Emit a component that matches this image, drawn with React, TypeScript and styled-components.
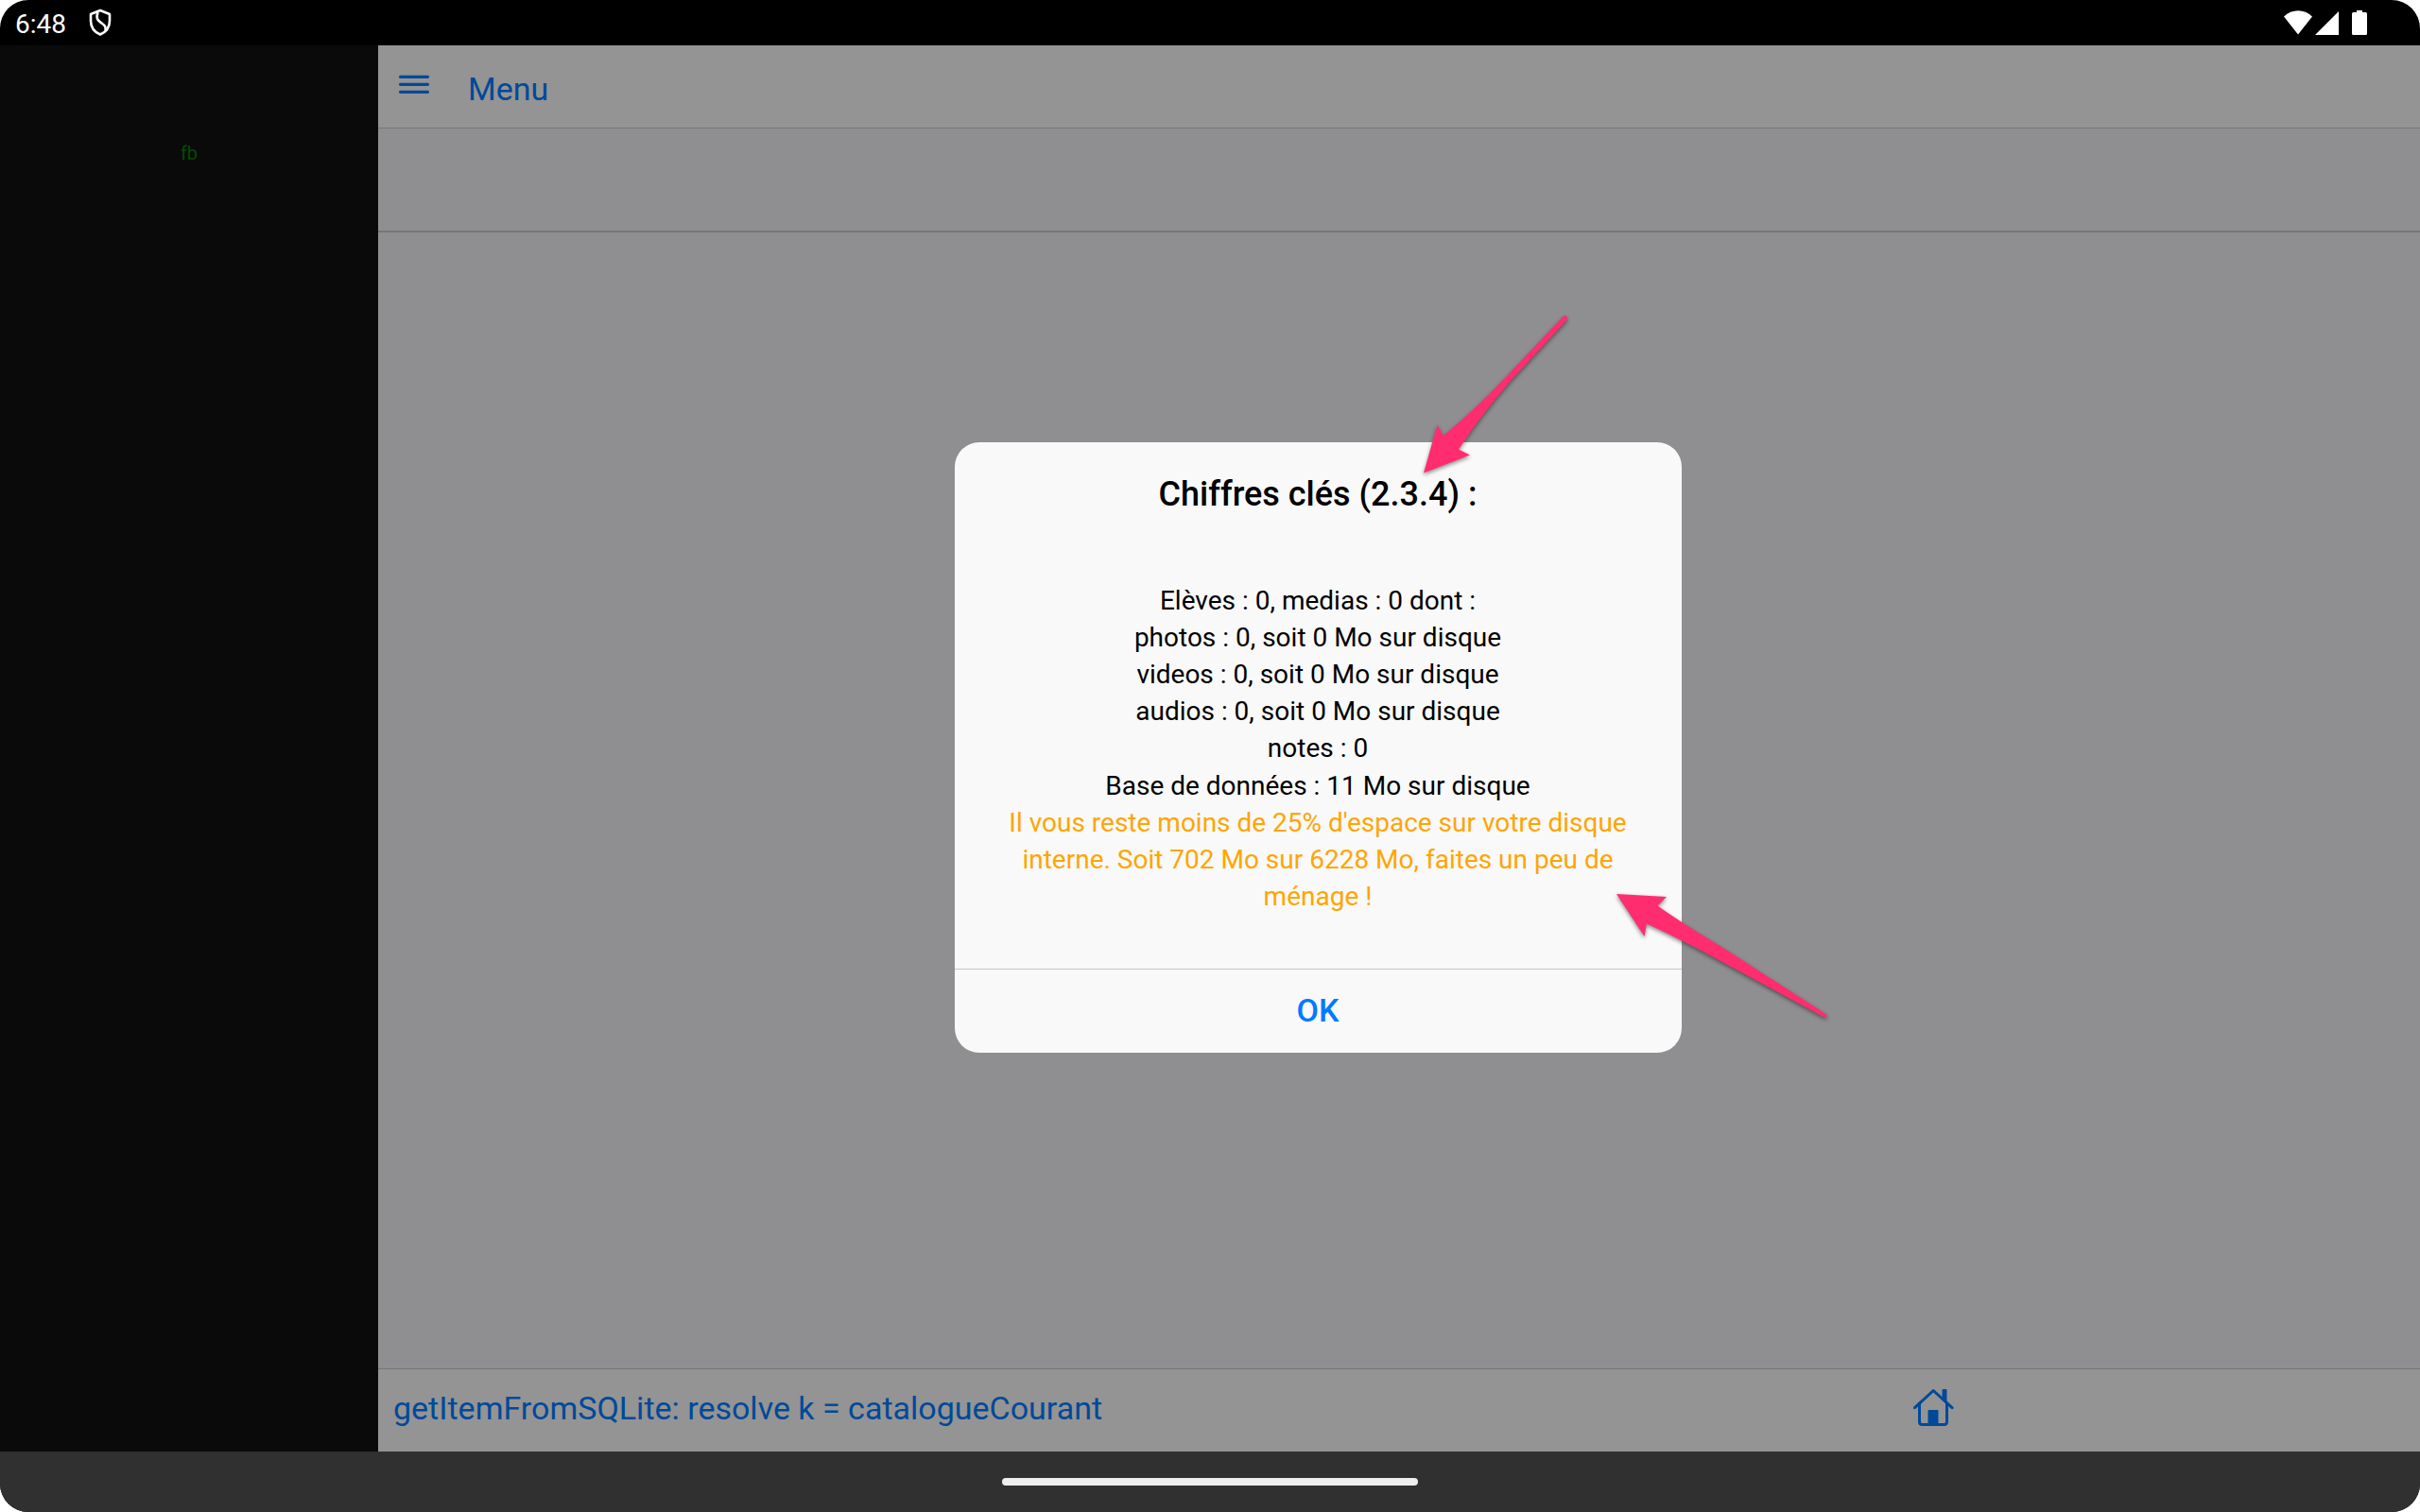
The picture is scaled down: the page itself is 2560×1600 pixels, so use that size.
import React from "react";
import styled, { createGlobalStyle } from "styled-components";

const Global = createGlobalStyle`
  html, body { margin: 0; padding: 0; background: #fff; overflow: hidden; }
  * { box-sizing: border-box; }
`;

const Device = styled.div`
  position: relative;
  width: 2560px;
  height: 1600px;
  display: flex;
  flex-direction: column;
  overflow: hidden;
  border-radius: 30px;
  background: #000;
  font-family: Roboto, "Noto Sans", sans-serif;
`;

const StatusBar = styled.header`
  flex: 0 0 48px;
  display: flex;
  align-items: center;
  justify-content: space-between;
  padding: 0 56px 0 16px;
  color: #fff;
`;

const StatusGroup = styled.div<{ $gap: number }>`
  display: flex;
  align-items: center;
  gap: ${(p) => p.$gap}px;
  svg { display: block; }
`;

const Clock = styled.span`
  font-size: 28px;
  line-height: 33px;
  padding-top: 2px;
`;

const Content = styled.div`
  flex: 1;
  min-height: 0;
  display: flex;
`;

const Sidebar = styled.aside`
  flex: 0 0 400px;
  background: #0a0a0a;
  padding-top: 102px;
  text-align: center;
`;

const SidebarLabel = styled.span`
  display: block;
  font-size: 20px;
  line-height: 24px;
  color: #004d00;
`;

const Main = styled.main`
  flex: 1;
  min-width: 0;
  display: flex;
  flex-direction: column;
  background: #8f8f92;
`;

const NavBar = styled.nav`
  flex: 0 0 88px;
  display: flex;
  align-items: flex-start;
  padding: 26px 20px 0 16px;
  gap: 35px;
  background: #949494;
  border-bottom: 1px solid #767676;
  color: #004999;
  svg { display: block; }
`;

const NavTitle = styled.span`
  font-size: 34px;
  line-height: 40px;
`;

const SubBar = styled.div`
  flex: 0 0 110px;
  border-bottom: 2px solid #777779;
`;

const Page = styled.section`
  flex: 1;
`;

const Toolbar = styled.footer`
  flex: 0 0 88px;
  display: flex;
  align-items: flex-start;
  justify-content: space-between;
  padding: 21px 492px 0 16px;
  background: #949494;
  border-top: 1px solid #767676;
  color: #004999;
  svg { display: block; margin-top: -1px; }
`;

const GestureBar = styled.div`
  flex: 0 0 64px;
  display: flex;
  justify-content: center;
  padding-top: 28px;
  background: #303030;
`;

const GestureHandle = styled.div`
  width: 440px;
  height: 8px;
  border-radius: 4px;
  background: #eeeeee;
`;

const Dialog = styled.div`
  position: absolute;
  left: 1010px;
  top: 468px;
  width: 769px;
  height: 646px;
  display: flex;
  flex-direction: column;
  border-radius: 26px;
  background: #f9f9f9;
  overflow: hidden;
  text-align: center;
  color: #000;
`;

const DialogTitle = styled.h2`
  margin: 0;
  padding: 34px 1px 0 0;
  font-size: 36px;
  line-height: 42px;
  font-weight: 500;
`;

const DialogBody = styled.div`
  flex: 1;
  padding: 71.5px 33px 0 32px;
  font-size: 28px;
  line-height: 39.2px;
`;

const Line = styled.div<{ $warn?: boolean }>`
  color: ${(p) => (p.$warn ? "#ffa500" : "#000")};
`;

const DialogButton = styled.button`
  flex: 0 0 89px;
  border: 0;
  border-top: 1px solid #c4c4c4;
  padding: 0 1px 2px 0;
  background: transparent;
  font: 500 34px/86px Roboto, sans-serif;
  color: #007aff;
`;

const Annotations = styled.svg`
  position: absolute;
  left: 0;
  top: 0;
  pointer-events: none;
  filter: drop-shadow(0 2px 2px rgba(0, 0, 0, 0.45));
`;

const ShieldIcon = () => (
  <svg width="24" height="30" viewBox="0 0 24 30" fill="none" stroke="#fff" strokeWidth="2.6">
    <path d="M12 2 L22 6 V13 C22 20 18 25 12 27.5 C6 25 2 20 2 13 V6 Z" strokeLinejoin="round" />
    <path d="M9.5 4 C7 11 10 13 13.5 15.500 C17 18 18 19 17.500 23" />
  </svg>
);

const WifiIcon = () => (
  <svg width="30" height="26" viewBox="0 0 30 26" fill="#fff">
    <path d="M0 6.500 C8.500 -1.800 21.500 -1.800 30 6.500 L15 25.500 Z" />
  </svg>
);

const SignalIcon = () => (
  <svg width="25" height="25" viewBox="0 0 25 25" fill="#fff"><path d="M25 0V25H0Z" /></svg>
);

const BatteryIcon = () => (
  <svg width="16" height="26" viewBox="0 0 16 26" fill="#fff">
    <path d="M5 0H11V2H14.500Q16 2 16 3.500V24.500Q16 26 14.500 26H1.500Q0 26 0 24.500V3.500Q0 2 1.500 2H5Z" />
  </svg>
);

const MenuIcon = () => (
  <svg width="44" height="32" viewBox="0 0 44 32" stroke="currentColor" strokeWidth="3.2" strokeLinecap="round">
    <path d="M7.500 7.300H36.500M7.500 15.300H36.500M7.500 23.300H36.500" />
  </svg>
);

const HomeIcon = () => (
  <svg width="44" height="40" viewBox="0.5 0 44 40" fill="none" stroke="currentColor" strokeWidth="3" strokeLinecap="round" strokeLinejoin="round">
    <path d="M2 20.700L21.700 2.500L41.500 20.700" />
    <path d="M7 16V35.500Q7 38.500 10 38.500H33Q36 38.500 36 35.500V16" />
    <path d="M16 38V24Q16 23 17 23H26Q27 23 27 24V38Z" fill="currentColor" stroke="none" />
    <path d="M31 10V2Q31 1 32 1H35Q36 1 36 2V15L31 10Z" fill="currentColor" stroke="none" />
  </svg>
);

const lines = [
  "Elèves : 0, medias : 0 dont :",
  "photos : 0, soit 0 Mo sur disque",
  "videos : 0, soit 0 Mo sur disque",
  "audios : 0, soit 0 Mo sur disque",
  "notes : 0",
  "Base de données : 11 Mo sur disque",
];

export default function App() {
  return (
    <>
      <Global />
      <Device>
        <StatusBar>
          <StatusGroup $gap={24}>
            <Clock>6:48</Clock>
            <ShieldIcon />
          </StatusGroup>
          <StatusGroup $gap={14}>
            <StatusGroup $gap={3}>
              <WifiIcon />
              <SignalIcon />
            </StatusGroup>
            <BatteryIcon />
          </StatusGroup>
        </StatusBar>
        <Content>
          <Sidebar>
            <SidebarLabel>fb</SidebarLabel>
          </Sidebar>
          <Main>
            <NavBar>
              <MenuIcon />
              <NavTitle>Menu</NavTitle>
            </NavBar>
            <SubBar />
            <Page />
            <Toolbar>
              <NavTitle>getItemFromSQLite: resolve k = catalogueCourant</NavTitle>
              <HomeIcon />
            </Toolbar>
          </Main>
        </Content>
        <GestureBar>
          <GestureHandle />
        </GestureBar>
        <Dialog role="dialog">
          <DialogTitle>Chiffres clés (2.3.4) :</DialogTitle>
          <DialogBody>
            {lines.map((l) => (
              <Line key={l}>{l}</Line>
            ))}
            <Line $warn>
              Il vous reste moins de 25% d'espace sur votre disque interne. Soit 702 Mo sur 6228 Mo, faites un peu de
              ménage !
            </Line>
          </DialogBody>
          <DialogButton>OK</DialogButton>
        </Dialog>
        <Annotations width="2560" height="1600" viewBox="0 0 2560 1600" fill="#ff2d6f">
          <path d="M1506 500.500L1520.500 449.500L1527 461Q1560 434 1594 398L1653.500 335Q1656 333 1657.500 335Q1658.500 337 1657 339L1600 401Q1568 437 1543 475.500L1555 481.500Z" />
          <path d="M1710 946L1763 949L1753.500 958.500Q1778 976 1826 1005L1931.500 1073Q1933.500 1074.500 1932.500 1076Q1931 1077 1928 1075.500L1822 1018Q1780 995 1742 977.500L1739.500 991Z" />
        </Annotations>
      </Device>
    </>
  );
}
